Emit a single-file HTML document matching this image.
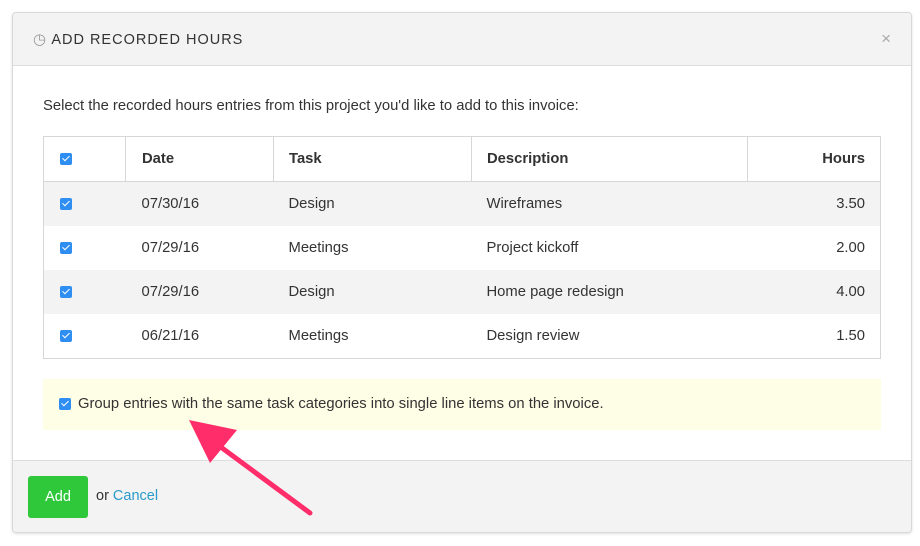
<!DOCTYPE html>
<html><head><style>
body{margin:0;width:920px;height:546px;background:#fff;font-family:"Liberation Sans",sans-serif;position:relative;overflow:hidden;color:#333}
.modal{position:absolute;left:12px;top:12px;width:898px;height:519px;border:1px solid #d8d8d8;border-radius:4px;background:#fff;box-shadow:0 1px 3px rgba(0,0,0,.12);overflow:hidden}
.hd{height:52px;background:#f3f3f3;border-bottom:1px solid #ddd;position:relative}
.hd .t{position:absolute;left:20px;top:17px;font-size:14.5px;letter-spacing:1px;color:#333}
.hd .x{position:absolute;right:20px;top:16px;color:#aaa;font-size:17px}
.intro{position:absolute;left:30px;top:85px;font-size:14.8px}
table{position:absolute;left:30px;top:123px;width:838px;border-collapse:collapse;border:1px solid #d6d6d6;font-size:14.8px}
td,th{height:44px;padding:0;text-align:left}
th{height:44px;border-right:1px solid #d6d6d6;border-bottom:1px solid #d6d6d6;font-weight:bold}
tr.g td{background:#f3f3f3}
.cb{display:inline-block;width:12px;height:12px;background:#2f8ef1;border-radius:2px;margin-left:16px;vertical-align:middle;position:relative}
.cb:after{content:"";position:absolute;left:4px;top:1px;width:3px;height:6px;border:solid #fff;border-width:0 1.5px 1.5px 0;transform:rotate(45deg)}
.y{position:absolute;left:30px;top:366px;width:838px;height:51px;background:#fefde5;font-size:14.8px;line-height:51px}
.ft{position:absolute;left:0;top:447px;width:898px;height:72px;background:#f3f3f3;border-top:1px solid #ddd}
.btn{position:absolute;left:15px;top:15px;width:60px;height:42px;background:#2ec83a;border-radius:3px;color:#fff;font-size:14.5px;line-height:42px;text-align:center}
.or{position:absolute;left:83px;top:27px;font-size:14.5px}
.or span{color:#2a9bc9}
</style></head><body>
<div class="modal">
<div class="hd"><div class="t"><span style="color:#999;font-size:15px">&#9719;</span> ADD RECORDED HOURS</div><div class="x">&#215;</div></div>
<div class="intro">Select the recorded hours entries from this project you'd like to add to this invoice:</div>
<table>
<tr><th style="width:81px"><span class="cb"></span></th><th style="width:131px;padding-left:16px">Date</th><th style="width:182px;padding-left:15px">Task</th><th style="width:260px;padding-left:15px">Description</th><th style="text-align:right;padding-right:15px">Hours</th></tr>
<tr class="g"><td><span class="cb"></span></td><td style="padding-left:16px">07/30/16</td><td style="padding-left:15px">Design</td><td style="padding-left:15px">Wireframes</td><td style="text-align:right;padding-right:15px">3.50</td></tr>
<tr><td><span class="cb"></span></td><td style="padding-left:16px">07/29/16</td><td style="padding-left:15px">Meetings</td><td style="padding-left:15px">Project kickoff</td><td style="text-align:right;padding-right:15px">2.00</td></tr>
<tr class="g"><td><span class="cb"></span></td><td style="padding-left:16px">07/29/16</td><td style="padding-left:15px">Design</td><td style="padding-left:15px">Home page redesign</td><td style="text-align:right;padding-right:15px">4.00</td></tr>
<tr><td><span class="cb"></span></td><td style="padding-left:16px">06/21/16</td><td style="padding-left:15px">Meetings</td><td style="padding-left:15px">Design review</td><td style="text-align:right;padding-right:15px">1.50</td></tr>
</table>
<div class="y"><span class="cb" style="margin-left:16px;margin-right:7px"></span>Group entries with the same task categories into single line items on the invoice.</div>
<div class="ft"><div class="btn">Add</div><div class="or">or <span>Cancel</span></div></div>
</div>
<svg style="position:absolute;left:0;top:0" width="920" height="546"><line x1="310" y1="513" x2="214" y2="442" stroke="#ff2d6a" stroke-width="5" stroke-linecap="round"/><polygon points="189,420 237,430 210,463" fill="#ff2d6a"/></svg>
</body></html>
